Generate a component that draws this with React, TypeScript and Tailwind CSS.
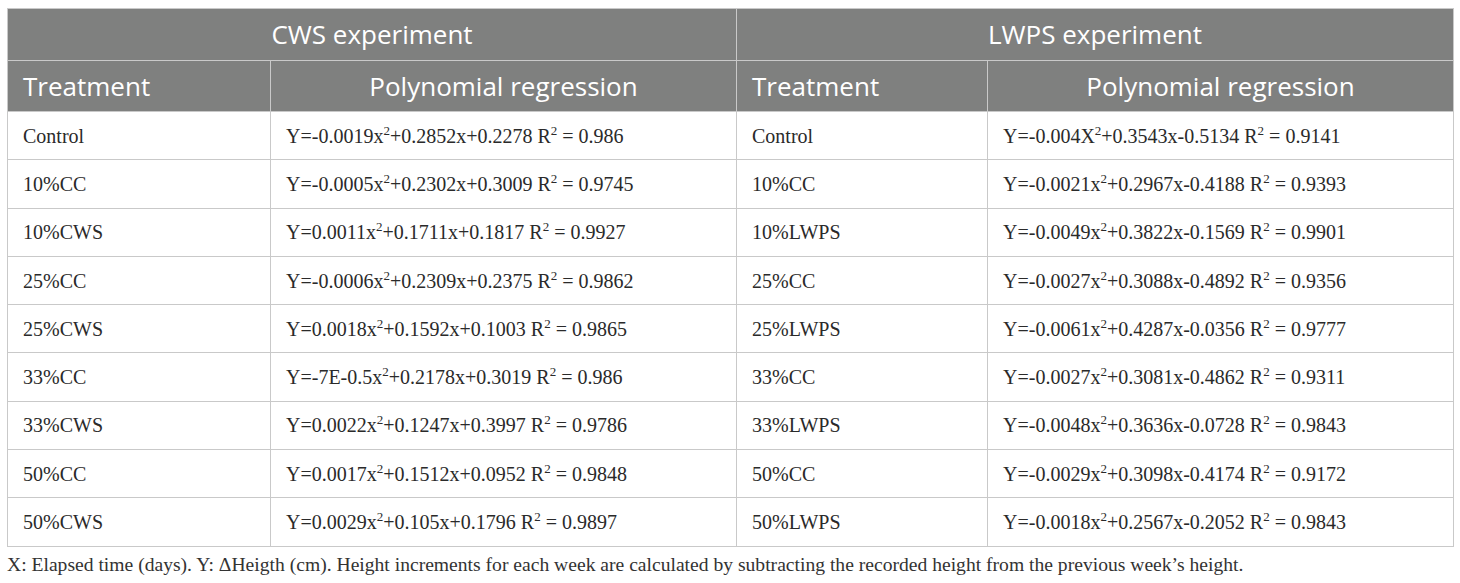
import React from 'react';

type Row = { t: string; eq: [string, string, string] };

const CWS: Row[] = [
  { t: 'Control', eq: ['Y=-0.0019x', '+0.2852x+0.2278 R', ' = 0.986'] },
  { t: '10%CC', eq: ['Y=-0.0005x', '+0.2302x+0.3009 R', ' = 0.9745'] },
  { t: '10%CWS', eq: ['Y=0.0011x', '+0.1711x+0.1817 R', ' = 0.9927'] },
  { t: '25%CC', eq: ['Y=-0.0006x', '+0.2309x+0.2375 R', ' = 0.9862'] },
  { t: '25%CWS', eq: ['Y=0.0018x', '+0.1592x+0.1003 R', ' = 0.9865'] },
  { t: '33%CC', eq: ['Y=-7E-0.5x', '+0.2178x+0.3019 R', ' = 0.986'] },
  { t: '33%CWS', eq: ['Y=0.0022x', '+0.1247x+0.3997 R', ' = 0.9786'] },
  { t: '50%CC', eq: ['Y=0.0017x', '+0.1512x+0.0952 R', ' = 0.9848'] },
  { t: '50%CWS', eq: ['Y=0.0029x', '+0.105x+0.1796 R', ' = 0.9897'] },
];

const LWPS: Row[] = [
  { t: 'Control', eq: ['Y=-0.004X', '+0.3543x-0.5134 R', ' = 0.9141'] },
  { t: '10%CC', eq: ['Y=-0.0021x', '+0.2967x-0.4188 R', ' = 0.9393'] },
  { t: '10%LWPS', eq: ['Y=-0.0049x', '+0.3822x-0.1569 R', ' = 0.9901'] },
  { t: '25%CC', eq: ['Y=-0.0027x', '+0.3088x-0.4892 R', ' = 0.9356'] },
  { t: '25%LWPS', eq: ['Y=-0.0061x', '+0.4287x-0.0356 R', ' = 0.9777'] },
  { t: '33%CC', eq: ['Y=-0.0027x', '+0.3081x-0.4862 R', ' = 0.9311'] },
  { t: '33%LWPS', eq: ['Y=-0.0048x', '+0.3636x-0.0728 R', ' = 0.9843'] },
  { t: '50%CC', eq: ['Y=-0.0029x', '+0.3098x-0.4174 R', ' = 0.9172'] },
  { t: '50%LWPS', eq: ['Y=-0.0018x', '+0.2567x-0.2052 R', ' = 0.9843'] },
];

function Eq({ parts }: { parts: [string, string, string] }) {
  return (
    <>
      {parts[0]}
      <sup className="text-[13px] align-baseline relative -top-[8px]">2</sup>
      {parts[1]}
      <sup className="text-[13px] align-baseline relative -top-[8px]">2</sup>
      {parts[2]}
    </>
  );
}

const th = 'border border-[#c9c9c9] font-normal text-white';
const td = 'border border-[#c9c9c9] px-[15px] text-left';

export default function App() {
  return (
    <div className="bg-white w-[1460px] h-[583px] pt-[8px] pl-[7px]">
      <table className="table-fixed border-collapse w-[1446px] text-[#2a2a2a]">
        <colgroup>
          <col className="w-[263px]" />
          <col className="w-[466px]" />
          <col className="w-[251px]" />
          <col className="w-[466px]" />
        </colgroup>
        <thead className="bg-[#7f807f] font-['Open_Sans',sans-serif] text-[26px]">
          <tr className="h-[52px]">
            <th colSpan={2} className={th}>CWS experiment</th>
            <th colSpan={2} className={th}>LWPS experiment</th>
          </tr>
          <tr className="h-[51px]">
            <th className={`${th} text-left px-[15px]`}>Treatment</th>
            <th className={th}>Polynomial regression</th>
            <th className={`${th} text-left px-[15px]`}>Treatment</th>
            <th className={th}>Polynomial regression</th>
          </tr>
        </thead>
        <tbody className="font-['Liberation_Serif',serif] text-[20px]">
          {CWS.map((r, i) => (
            <tr key={r.t + i} className="h-[48.3px]">
              <td className={td}>{r.t}</td>
              <td className={td}><Eq parts={r.eq} /></td>
              <td className={td}>{LWPS[i].t}</td>
              <td className={td}><Eq parts={LWPS[i].eq} /></td>
            </tr>
          ))}
        </tbody>
      </table>
      <p className="mt-[8px] font-['Liberation_Serif',serif] text-[19.6px] text-[#333] leading-none">
        X: Elapsed time (days). Y: ΔHeigth (cm). Height increments for each week are calculated by subtracting the recorded height from the previous week’s height.
      </p>
    </div>
  );
}
